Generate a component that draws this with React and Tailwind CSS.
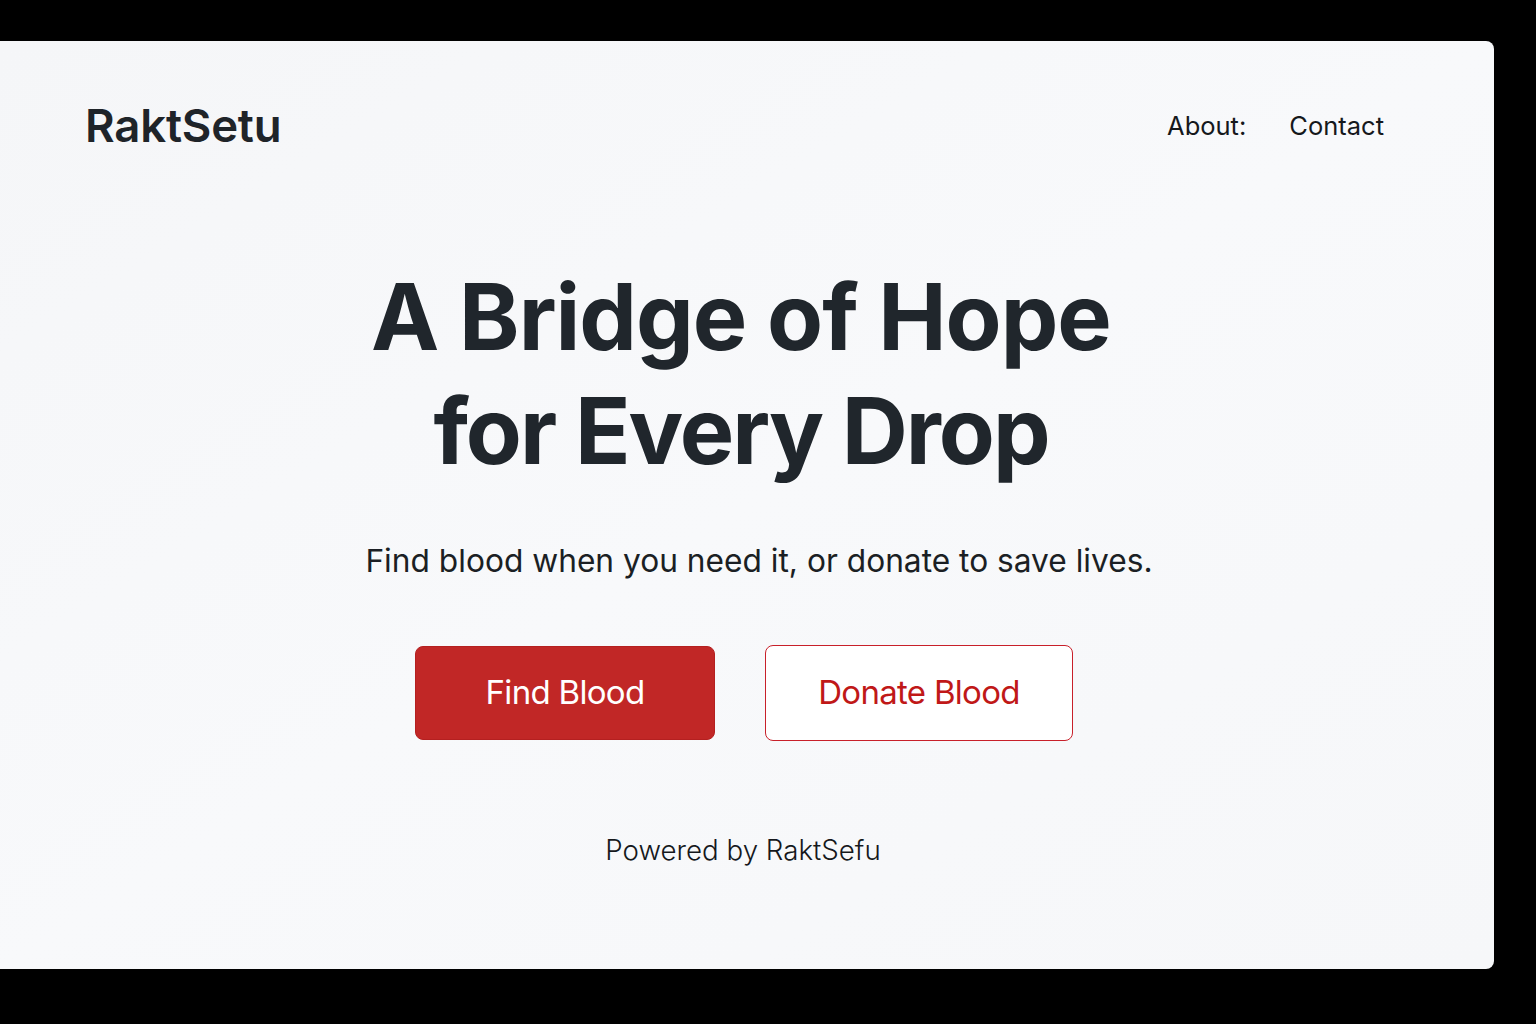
export default function App() {
  return (
    <div className="w-[1536px] h-[1024px] bg-black pt-[41px] pr-[42px] pb-[55px] font-['Inter',sans-serif]">
      <div className="h-full rounded-r-[8px] bg-gradient-to-br from-[#f5f6f8] via-[#f8f9fb] to-[#f6f7f9] flex flex-col">
        {/* Header */}
        <header className="flex items-center justify-between pl-[85px] pr-[110px] pt-[62px]">
          <h1 className="text-[45.5px] font-semibold tracking-[-0.2px] text-[#1f2429] leading-none">RaktSetu</h1>
          <nav className="flex items-center gap-[43px] text-[25.5px] text-[#15181c]">
            <a href="#">About:</a>
            <a href="#">Contact</a>
          </nav>
        </header>

        {/* Hero */}
        <main className="flex flex-col items-center text-center mt-[111px]">
          <h2 className="pr-[12px] text-[91.5px] font-bold leading-[114px] tracking-[-1px] text-[#20262c]">
            A Bridge of Hope
            <br />
            <span className="tracking-[-2px]">for Every Drop</span>
          </h2>
          <p className="mt-[49px] text-[31.7px] text-[#1b1f24] ml-[24px]">
            Find blood when you need it, or donate to save lives.
          </p>
          <div className="mt-[61px] mr-[6px] flex items-center gap-[50px]">
            <button className="w-[300px] h-[94px] rounded-[8px] bg-[#c12726] text-white text-[33px] tracking-[-0.7px] border border-[#b42020]">
              Find Blood
            </button>
            <button className="w-[308px] h-[96px] rounded-[8px] bg-white text-[#c01818] text-[33px] tracking-[-0.7px] border border-[#c8202a]">
              Donate Blood
            </button>
          </div>
          <p className="mt-[89px] mr-[8px] text-[27.7px] text-[#15181c] font-light">Powered by RaktSefu</p>
        </main>
      </div>
    </div>
  );
}
